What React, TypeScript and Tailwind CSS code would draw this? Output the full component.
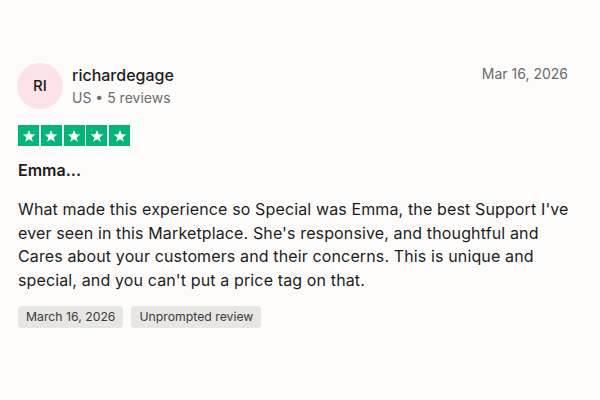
import React from 'react';

function Star() {
  return (
    <svg viewBox="0 0 24 24" className="w-[14px] h-[14px]" fill="white">
      <path d="M12 1.8l2.9 7.3 7.8.4-6.1 4.9 2.1 7.6L12 17.7l-6.6 4.3 2.1-7.6-6.1-4.9 7.8-.4z" />
    </svg>
  );
}

export default function App() {
  const font = { fontFamily: 'Inter, "Liberation Sans", sans-serif' };
  return (
    <div className="w-[600px] h-[400px] bg-[#fdfcfb] text-[#1c1c1c]" style={font}>
      <div className="px-[18px] pt-[63px]">
        <div className="flex items-start">
          <div className="w-[46px] h-[46px] rounded-full bg-[#fde3e8] flex items-center justify-center text-[15px] font-medium text-[#1c1c1c] -ml-[1px]">
            RI
          </div>
          <div className="ml-[9px] flex-1 pt-[1px]">
            <div className="text-[16px] leading-[22px] font-medium">richardegage</div>
            <div className="text-[14px] leading-[20px] text-[#6b6b6b] mt-[2px]">US • 5 reviews</div>
          </div>
          <div className="text-[14px] leading-[20px] text-[#6b6b6b] pt-[1px] mr-[14px]">Mar 16, 2026</div>
        </div>
        <div className="flex gap-[1.75px] mt-[16px]">
          {[0, 1, 2, 3, 4].map((i) => (
            <div key={i} className="w-[21px] h-[21px] bg-[#00b67a] flex items-center justify-center">
              <Star />
            </div>
          ))}
        </div>
        <div className="mt-[12px] text-[16px] leading-[24px] font-semibold">Emma...</div>
        <p className="mt-[16px] text-[16px] leading-[23.7px] tracking-[0.13px]">
          What made this experience so Special was Emma, the best Support I've ever seen in this Marketplace. She's responsive, and thoughtful and Cares about your customers and their concerns. This is unique and special, and you can't put a price tag on that.
        </p>
        <div className="flex gap-[8px] mt-[13px]">
          <span className="px-[8px] h-[22px] flex items-center rounded-[4px] bg-[#e8e6e3] text-[12.25px] text-[#3b3b3b]">March 16, 2026</span>
          <span className="px-[8px] h-[22px] flex items-center rounded-[4px] bg-[#e8e6e3] text-[12.25px] text-[#3b3b3b]">Unprompted review</span>
        </div>
      </div>
    </div>
  );
}
